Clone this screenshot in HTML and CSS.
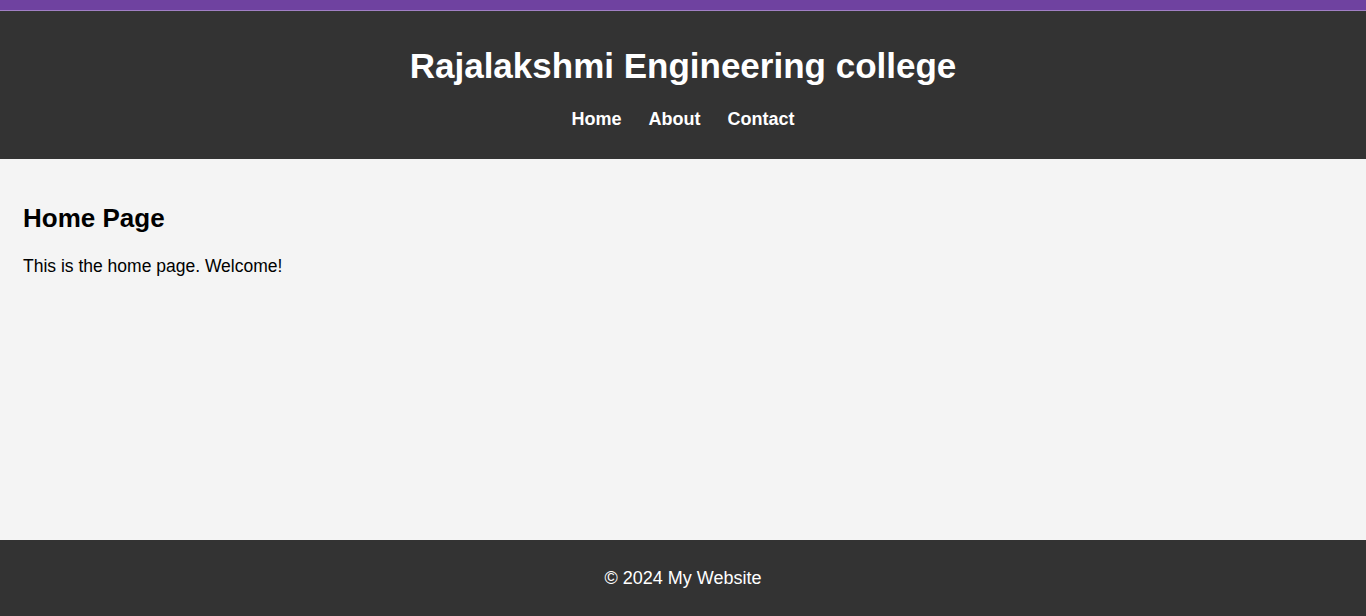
FILE: index.html
```html
<!DOCTYPE html>
<html lang="en">
<head>
<meta charset="utf-8">
<title>Rajalakshmi Engineering college</title>
<link rel="stylesheet" href="styles.css">
</head>
<body>
<header class="site-header">
  <h1 class="site-title">Rajalakshmi Engineering college</h1>
  <nav class="site-nav">
    <a href="#" class="nav-link">Home</a>
    <a href="#" class="nav-link">About</a>
    <a href="#" class="nav-link">Contact</a>
  </nav>
</header>
<main class="content">
  <h2 class="page-title">Home Page</h2>
  <p class="page-text">This is the home page. Welcome!</p>
</main>
<footer class="site-footer">
  <p class="footer-text">&copy; 2024 My Website</p>
</footer>
</body>
</html>
```
FILE: styles.css
```css
html, body {
  margin: 0;
  padding: 0;
  height: 100%;
}
body {
  font-family: "Liberation Sans", Arial, sans-serif;
  background: #f4f4f4;
  color: #000;
  display: flex;
  flex-direction: column;
  min-height: 100vh;
}
.site-header {
  background: #333;
  color: #fff;
  text-align: center;
  border-top: 10px solid #6f42a0;
  box-shadow: inset 0 1px 0 #a07fc4;
  padding: 20px 0 29px;
}
.site-title {
  margin: 15px 0 21px;
  font-size: 35px;
  line-height: 42px;
}
.site-nav {
  display: flex;
  justify-content: center;
  gap: 27px;
}
.nav-link {
  color: #fff;
  text-decoration: none;
  font-weight: bold;
  font-size: 18px;
  line-height: 22px;
}
.content {
  flex: 1;
  padding: 20px 23px;
}
.page-title {
  font-size: 26px;
  margin: 24px 0 22px;
}
.page-text {
  font-size: 17.5px;
  margin: 0;
}
.site-footer {
  background: #333;
  color: #fff;
  text-align: center;
  padding: 27px 0;
}
.footer-text {
  margin: 0;
  font-size: 18px;
  line-height: 22px;
}
```
